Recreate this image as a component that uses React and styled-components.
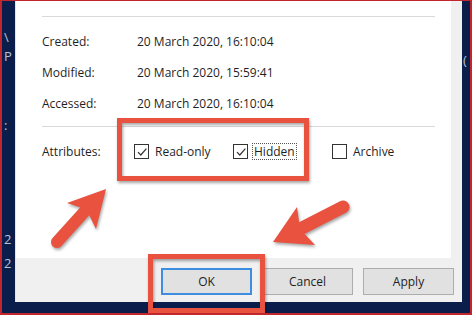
import styled, { createGlobalStyle } from "styled-components";

const GlobalStyle = createGlobalStyle`
  html, body {
    margin: 0;
    padding: 0;
    background: #0b1e4b;
  }
  body {
    font-family: "Open Sans", "Noto Sans", sans-serif;
  }
`;

const times = [
  { label: "Created:", value: "20 March 2020, 16:10:04" },
  { label: "Modified:", value: "20 March 2020, 15:59:41" },
  { label: "Accessed:", value: "20 March 2020, 16:10:04" },
];

const attributes = [
  { name: "Read-only", checked: true },
  { name: "Hidden", checked: true, focused: true },
  { name: "Archive", checked: false },
];

// peeks of the console window behind the dialog
const leftGlyphs = [
  { ch: "\\", top: 29 },
  { ch: "P", top: 5 },
  { ch: ":", top: 55 },
  { ch: "2", top: 100 },
  { ch: "2", top: 10 },
];

const ARROW = "#e8523f";

const App = () => {
  return (
    <>
      <GlobalStyle />
      <Frame>
        <Backdrop>
          {leftGlyphs.map((g, i) => (
            <Glyph key={i} $top={g.top}>{g.ch}</Glyph>
          ))}
        </Backdrop>

        <Dialog>
          <TabPage>
            <Divider />
            <Section>
              {times.map((row) => (
                <InfoRow key={row.label}>
                  <Label>{row.label}</Label>
                  <Value>{row.value}</Value>
                </InfoRow>
              ))}
            </Section>
            <Divider />
            <Section $bottom={0}>
              <InfoRow>
                <Label $width={92}>Attributes:</Label>
                {attributes.map((a) => (
                  <CheckItem key={a.name}>
                    <Box>
                      {a.checked ? (
                        <svg width="12" height="12" viewBox="0 0 12 12">
                          <path d="M2 6.2 L4.8 9 L10.4 2.6" fill="none" stroke="#333" strokeWidth="1.2" />
                        </svg>
                      ) : null}
                    </Box>
                    <CheckText $focused={a.focused}>{a.name}</CheckText>
                  </CheckItem>
                ))}
              </InfoRow>
            </Section>
          </TabPage>

          <ButtonBar>
            <DialogButton $primary>OK</DialogButton>
            <DialogButton>Cancel</DialogButton>
            <DialogButton>Apply</DialogButton>
          </ButtonBar>
        </Dialog>

        <RightBackdrop>
          <Glyph $top={52}>(</Glyph>
        </RightBackdrop>

        <Annotations width="472" height="315" viewBox="0 0 472 315">
          <g fill="none" stroke={ARROW} strokeWidth="5">
            <rect x="119.5" y="120.5" width="187" height="58" />
            <rect x="150.5" y="256.5" width="112" height="54" />
          </g>
          <g fill={ARROW}>
            <line x1="57" y1="242" x2="85" y2="211" stroke={ARROW} strokeWidth="12" strokeLinecap="round" />
            <polygon points="106,189 96,229 86.5,209.6 67,203" />
            <line x1="343" y1="207" x2="301" y2="228.5" stroke={ARROW} strokeWidth="13" strokeLinecap="round" />
            <polygon points="273,242 297,207 300,229 315,245" />
          </g>
        </Annotations>
      </Frame>
    </>
  );
};

const Frame = styled.div`
  position: relative;
  width: 472px;
  height: 315px;
  box-sizing: border-box;
  border: 2px solid #c0262c;
  border-top-width: 1px;
  background: #0b1e4b;
  display: flex;
  overflow: hidden;
`;

const Backdrop = styled.div`
  width: 11px;
  flex-shrink: 0;
  display: flex;
  flex-direction: column;
  align-items: flex-start;
  padding-left: 2px;
  overflow: hidden;
  color: #b8c2d8;
  font-size: 13px;
  line-height: 14px;
`;

const RightBackdrop = styled(Backdrop)`
  width: 7px;
  padding-left: 1px;
`;

const Glyph = styled.span`
  margin-top: ${({ $top }) => $top}px;
`;

const Dialog = styled.div`
  flex: 1;
  display: flex;
  flex-direction: column;
  background: #f0f0f0;
  border-left: 1px solid #e4e4e4;
  margin-bottom: 11px;
`;

const TabPage = styled.div`
  flex: 1;
  background: #ffffff;
  margin-right: 11px;
  padding: 15px 16px 0 26px;
`;

const Divider = styled.div`
  height: 1px;
  background: #d9d9d9;
`;

const Section = styled.div`
  padding: 9px 0 ${({ $bottom = 7 }) => $bottom}px;
`;

const InfoRow = styled.div`
  display: flex;
  align-items: center;
  height: 31px;
  font-size: 12px;
  color: #1f1f1f;
`;

const Label = styled.span`
  width: ${({ $width = 95 }) => $width}px;
  flex-shrink: 0;
`;

const Value = styled.span`
  white-space: nowrap;
`;

const CheckItem = styled.label`
  width: 99px;
  display: flex;
  align-items: center;
  gap: 4px;
`;

const Box = styled.span`
  width: 13px;
  height: 13px;
  border: 1px solid #333;
  background: #fff;
  display: flex;
  align-items: center;
  justify-content: center;
`;

const CheckText = styled.span`
  padding: 0 1px;
  line-height: 15px;
  border: 1px dotted ${({ $focused }) => ($focused ? "#555" : "transparent")};
`;

const ButtonBar = styled.div`
  height: 44px;
  display: flex;
  justify-content: flex-end;
  align-items: flex-start;
  gap: 10px;
  padding: 10px 8px 0 0;
  box-sizing: border-box;
`;

const DialogButton = styled.button`
  width: 91px;
  height: 27px;
  box-sizing: border-box;
  background: #e1e1e1;
  border: ${({ $primary }) => ($primary ? "2px solid #3d8ee0" : "1px solid #adadad")};
  font-family: "Open Sans", "Noto Sans", sans-serif;
  font-size: 12px;
  color: #1e1e1e;
  padding: 0;
`;

const Annotations = styled.svg`
  position: absolute;
  left: -2px;
  top: -1px;
  pointer-events: none;
  filter: drop-shadow(1px 2px 1.5px rgba(0, 0, 0, 0.35));
`;

export default App;
